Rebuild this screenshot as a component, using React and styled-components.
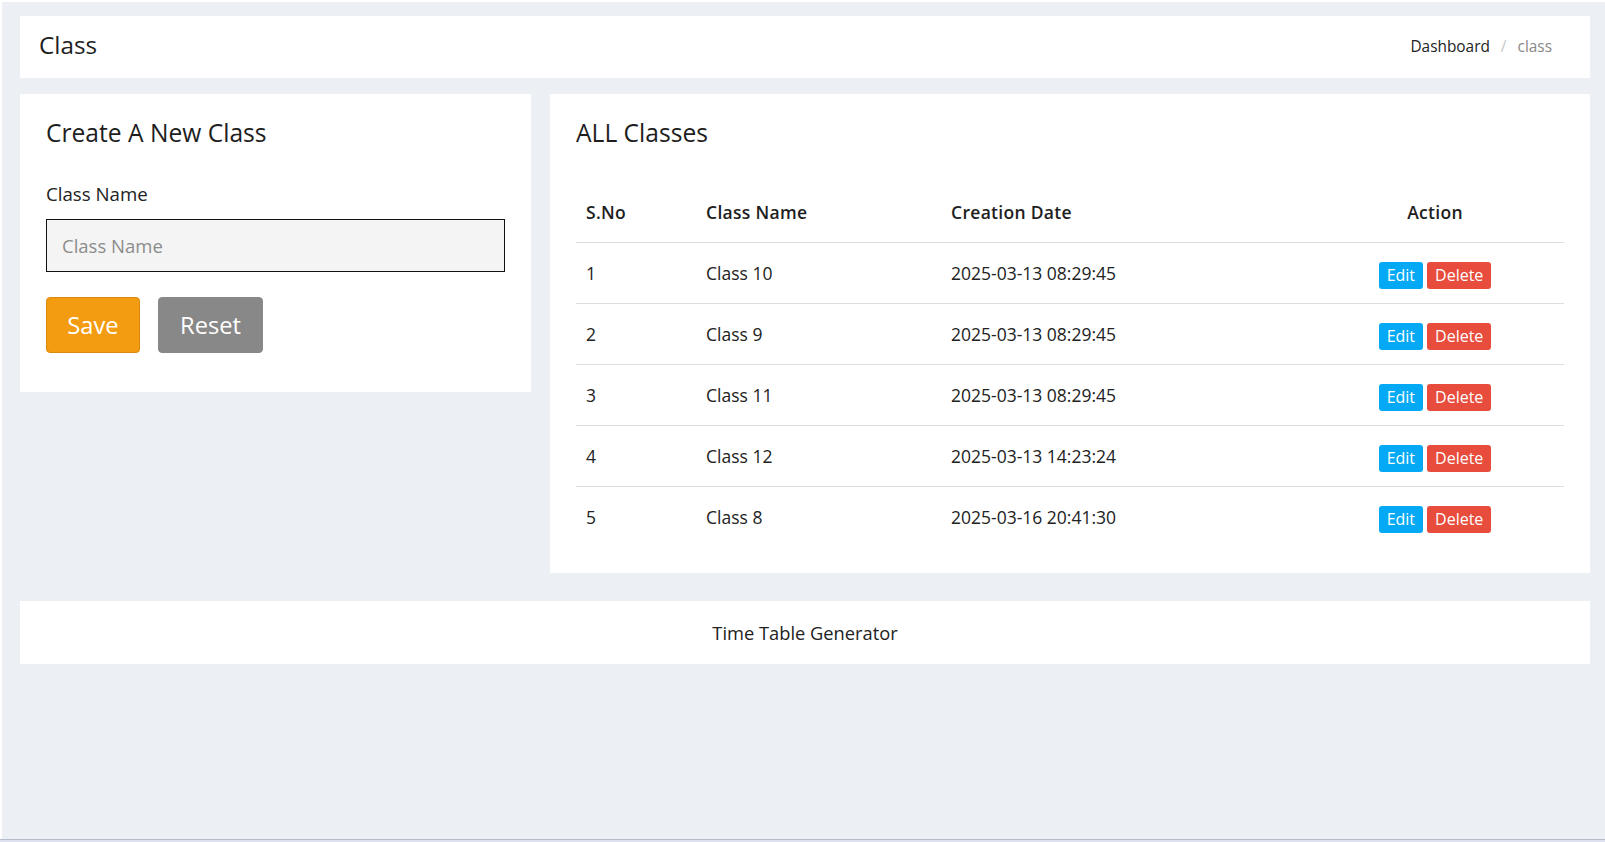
import React from "react";
import styled, { createGlobalStyle } from "styled-components";

const GlobalStyle = createGlobalStyle`
  html, body {
    margin: 0;
    padding: 0;
    height: 100%;
    overflow: hidden;
  }
  body {
    background: #ffffff;
    font-family: "Open Sans", "Noto Sans", Arial, sans-serif;
    color: #222;
  }
  * { box-sizing: border-box; }
`;

const Frame = styled.div`
  height: 842px;
  display: flex;
  flex-direction: column;
`;

const Content = styled.main`
  flex: 1;
  margin: 2px 0 0 2px;
  background: #ecf0f5;
  padding: 14px 15px 0 18px;
  display: flex;
  flex-direction: column;
`;

const BottomEdge = styled.div`
  height: 3px;
  border-top: 1px solid #b4bcc8;
  background: #dde1f0;
`;

const Card = styled.section`
  background: #ffffff;
`;

const PageHeader = styled(Card)`
  height: 62px;
  display: flex;
  align-items: center;
  justify-content: space-between;
  padding: 0 38px 0 19px;
`;

const PageTitle = styled.h1`
  margin: 0;
  font-size: 24.3px;
  font-weight: 400;
  line-height: 1.2;
  color: #1e1e1e;
  transform: translateY(-2px);
`;

const Crumbs = styled.nav`
  display: flex;
  align-items: center;
  gap: 11px;
  font-size: 15.4px;
  transform: translateY(-1px);
`;

const Crumb = styled.span`
  color: ${(p) => (p.$active ? "#888" : "#222")};
`;

const CrumbSep = styled.span`
  color: #c8c8c8;
`;

const Columns = styled.div`
  display: grid;
  grid-template-columns: 511px 1fr;
  gap: 19px;
  align-items: start;
  margin-top: 16px;
`;

const Panel = styled(Card)`
  padding: 24px 26px ${(p) => p.$bottom}px 26px;
`;

const PanelTitle = styled.h2`
  margin: 0;
  font-size: 24.6px;
  font-weight: 400;
  line-height: 1.2;
  color: #1e1e1e;
`;

const Field = styled.label`
  display: block;
  margin-top: 34px;
  font-size: 18.7px;
  line-height: 24px;
  color: #222;
`;

const TextInput = styled.input`
  display: block;
  width: 459px;
  height: 53px;
  margin-top: 13px;
  border: 1px solid #111;
  background: #f4f4f4;
  padding: 0 15px;
  font-family: inherit;
  font-size: 18.5px;
  color: #222;
  outline: none;
  &::placeholder {
    color: #8c8c8c;
  }
`;

const ButtonRow = styled.div`
  display: flex;
  gap: 18px;
  margin-top: 25px;
`;

const BigButton = styled.button`
  height: 56px;
  width: ${(p) => p.$w}px;
  border-radius: 4px;
  border: 1px solid ${(p) => p.$edge};
  background: ${(p) => p.$bg};
  color: #fff;
  font-family: inherit;
  font-size: 23.7px;
  padding: 0;
  cursor: pointer;
`;

const Table = styled.table`
  width: 100%;
  margin-top: 34px;
  border-collapse: separate;
  border-spacing: 0;
  table-layout: fixed;
`;

const Col = styled.col`
  width: ${(p) => p.$w}px;
`;

const Th = styled.th`
  padding: 16px 10px;
  line-height: 28px;
  font-size: 17.5px;
  font-weight: 600;
  color: #1e1e1e;
  text-align: ${(p) => (p.$center ? "center" : "left")};
  letter-spacing: 0.3px;
`;

const Td = styled.td`
  padding: 16px 10px;
  line-height: 28px;
  font-size: 17.5px;
  color: #222;
  border-top: 1px solid #dedede;
  vertical-align: middle;
`;

const Actions = styled.div`
  display: flex;
  justify-content: center;
  gap: 4px;
  height: 28px;
  align-items: center;
  transform: translateY(3px);
`;

const SmallButton = styled.button`
  height: 27px;
  padding: 0 8px;
  border: none;
  border-radius: 3px;
  background: ${(p) => p.$bg};
  color: #fff;
  font-family: inherit;
  font-size: 16px;
  line-height: 27px;
  cursor: pointer;
`;

const Footer = styled(Card)`
  margin-top: 28px;
  height: 63px;
  display: flex;
  align-items: center;
  justify-content: center;
  font-size: 18.3px;
  color: #222;
`;

const classes = [
  { id: 1, name: "Class 10", created: "2025-03-13 08:29:45" },
  { id: 2, name: "Class 9", created: "2025-03-13 08:29:45" },
  { id: 3, name: "Class 11", created: "2025-03-13 08:29:45" },
  { id: 4, name: "Class 12", created: "2025-03-13 14:23:24" },
  { id: 5, name: "Class 8", created: "2025-03-16 20:41:30" },
];

export default function App() {
  return (
    <>
      <GlobalStyle />
      <Frame>
        <Content>
          <PageHeader>
            <PageTitle>Class</PageTitle>
            <Crumbs>
              <Crumb>Dashboard</Crumb>
              <CrumbSep>/</CrumbSep>
              <Crumb $active>class</Crumb>
            </Crumbs>
          </PageHeader>

          <Columns>
            <Panel $bottom={39}>
              <PanelTitle>Create A New Class</PanelTitle>
              <Field htmlFor="className">Class Name</Field>
              <TextInput id="className" placeholder="Class Name" />
              <ButtonRow>
                <BigButton $w={94} $bg="#f39c12" $edge="#d9890c">
                  Save
                </BigButton>
                <BigButton $w={105} $bg="#888888" $edge="#888888">
                  Reset
                </BigButton>
              </ButtonRow>
            </Panel>

            <Panel $bottom={26}>
              <PanelTitle>ALL Classes</PanelTitle>
              <Table>
                <colgroup>
                  <Col $w={120} />
                  <Col $w={245} />
                  <Col $w={365} />
                  <Col $w={258} />
                </colgroup>
                <thead>
                  <tr>
                    <Th>S.No</Th>
                    <Th>Class Name</Th>
                    <Th>Creation Date</Th>
                    <Th $center>Action</Th>
                  </tr>
                </thead>
                <tbody>
                  {classes.map((c) => (
                    <tr key={c.id}>
                      <Td>{c.id}</Td>
                      <Td>{c.name}</Td>
                      <Td>{c.created}</Td>
                      <Td>
                        <Actions>
                          <SmallButton $bg="#03a9f4">Edit</SmallButton>
                          <SmallButton $bg="#e74c3c">Delete</SmallButton>
                        </Actions>
                      </Td>
                    </tr>
                  ))}
                </tbody>
              </Table>
            </Panel>
          </Columns>

          <Footer>Time Table Generator</Footer>
        </Content>
        <BottomEdge />
      </Frame>
    </>
  );
}
